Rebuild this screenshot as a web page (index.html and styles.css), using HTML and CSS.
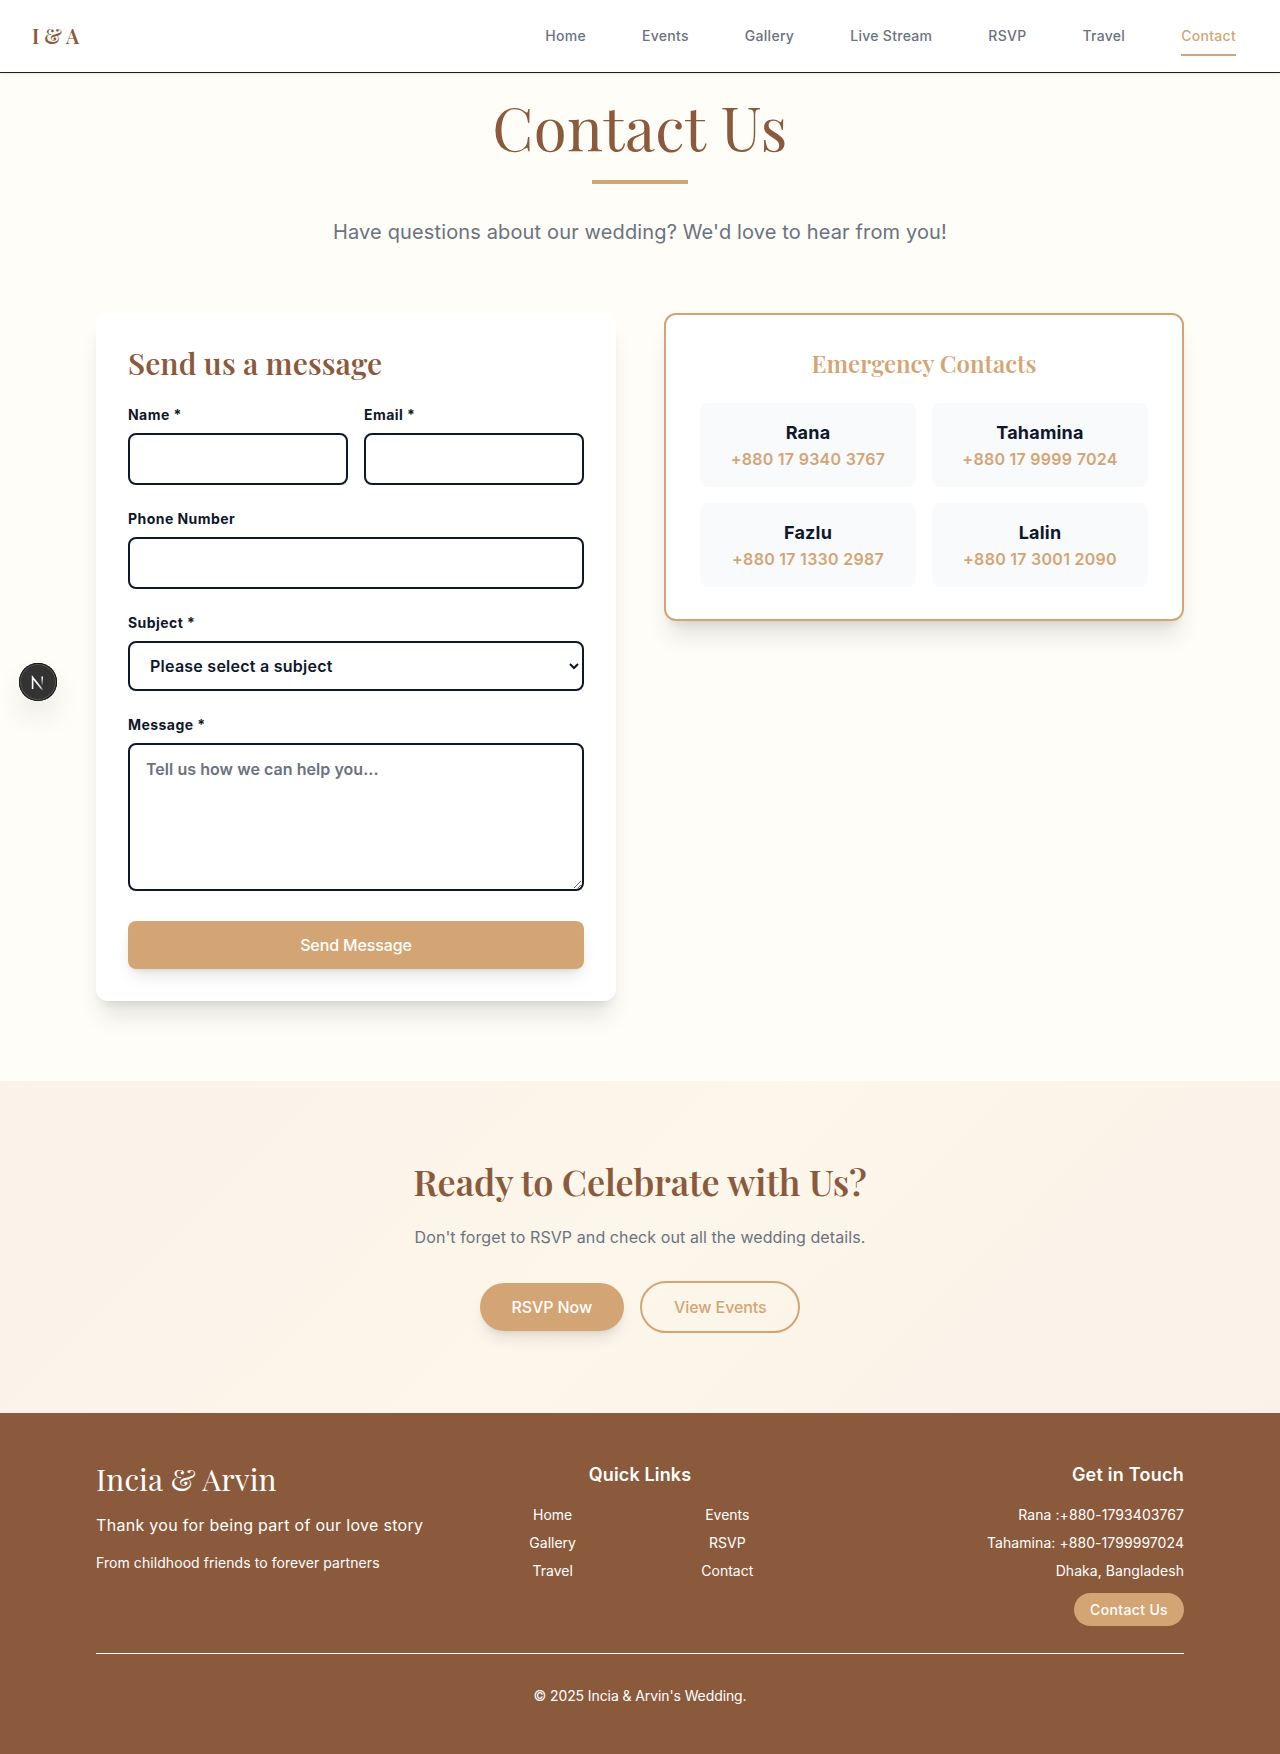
FILE: index.html
```
<!DOCTYPE html>
<html lang="en">
<head>
<meta charset="utf-8">
<title>Contact Us - Incia &amp; Arvin</title>
<link rel="stylesheet" href="styles.css">
</head>
<body>
<header class="navbar">
  <a class="brand" href="#">I &amp; A</a>
  <nav class="nav-links">
    <a href="#">Home</a>
    <a href="#">Events</a>
    <a href="#">Gallery</a>
    <a href="#">Live Stream</a>
    <a href="#">RSVP</a>
    <a href="#">Travel</a>
    <a href="#" class="active">Contact</a>
  </nav>
</header>

<main>
  <section class="intro">
    <h1>Contact Us</h1>
    <div class="rule"></div>
    <p>Have questions about our wedding? We'd love to hear from you!</p>
  </section>

  <section class="columns">
    <div class="card form-card">
      <h2>Send us a message</h2>
      <form>
        <div class="pair">
          <div class="field"><label for="name">Name *</label><input id="name" type="text"></div>
          <div class="field"><label for="email">Email *</label><input id="email" type="email"></div>
        </div>
        <div class="field"><label for="phone">Phone Number</label><input id="phone" type="tel"></div>
        <div class="field"><label for="subject">Subject *</label>
          <select id="subject"><option>Please select a subject</option></select>
        </div>
        <div class="field"><label for="message">Message *</label>
          <textarea id="message" placeholder="Tell us how we can help you..."></textarea>
        </div>
        <button class="submit" type="button">Send Message</button>
      </form>
    </div>

    <div class="card contacts">
      <h3>Emergency Contacts</h3>
      <div class="contact-grid">
        <div class="person"><strong>Rana</strong><a href="#">+880 17 9340 3767</a></div>
        <div class="person"><strong>Tahamina</strong><a href="#">+880 17 9999 7024</a></div>
        <div class="person"><strong>Fazlu</strong><a href="#">+880 17 1330 2987</a></div>
        <div class="person"><strong>Lalin</strong><a href="#">+880 17 3001 2090</a></div>
      </div>
    </div>
  </section>

  <section class="cta">
    <h2>Ready to Celebrate with Us?</h2>
    <p>Don't forget to RSVP and check out all the wedding details.</p>
    <div class="cta-buttons">
      <a class="pill solid" href="#">RSVP Now</a>
      <a class="pill outline" href="#">View Events</a>
    </div>
  </section>
</main>

<footer class="footer">
  <div class="footer-top">
    <div class="about">
      <h3>Incia &amp; Arvin</h3>
      <p class="thanks">Thank you for being part of our love story</p>
      <p class="tagline">From childhood friends to forever partners</p>
    </div>
    <div class="quick">
      <h4>Quick Links</h4>
      <div class="quick-grid">
        <a href="#">Home</a><a href="#">Events</a>
        <a href="#">Gallery</a><a href="#">RSVP</a>
        <a href="#">Travel</a><a href="#">Contact</a>
      </div>
    </div>
    <div class="touch">
      <h4>Get in Touch</h4>
      <p>Rana :+880-1793403767</p>
      <p>Tahamina: +880-1799997024</p>
      <p>Dhaka, Bangladesh</p>
      <a class="footer-btn" href="#">Contact Us</a>
    </div>
  </div>
  <p class="copyright">© 2025 Incia &amp; Arvin's Wedding.</p>
</footer>

<button class="dev-badge" type="button" aria-label="Dev tools">
  <svg width="38" height="38" viewBox="0 0 38 38" fill="none">
    <defs>
      <linearGradient id="diag" x1="19" y1="20" x2="24.5" y2="27" gradientUnits="userSpaceOnUse"><stop stop-color="#fff"/><stop offset=".6" stop-color="#fff" stop-opacity=".8"/><stop offset="1" stop-color="#fff" stop-opacity="0"/></linearGradient>
      <linearGradient id="stem" x1="23" y1="14" x2="23" y2="23" gradientUnits="userSpaceOnUse"><stop stop-color="#fff"/><stop offset="1" stop-color="#fff" stop-opacity="0"/></linearGradient>
    </defs>
    <path d="M13.6 26V14.4L24 27.4" stroke="url(#diag)" stroke-width="1.6"/>
    <path d="M23.2 13.4V23" stroke="url(#stem)" stroke-width="1.6"/>
  </svg>
</button>
</body>
</html>
```
FILE: styles.css
```
:root {
  --brown: #8b5a3c;
  --gold: #d4a574;
  --ink: #0f172a;
  --slate: #6b7280;
  --serif: "Playfair Display", "Liberation Serif", serif;
}
* { box-sizing: border-box; margin: 0; padding: 0; }
body {
  background: #fefdf8;
  color: var(--ink);
  font: 16px/24px Inter, "Liberation Sans", sans-serif;
}
a { color: inherit; text-decoration: none; }
h1, h2, h3, h4 { font-weight: 600; white-space: nowrap; }

.navbar {
  display: flex;
  align-items: center;
  justify-content: space-between;
  height: 73px;
  padding: 0 44px 0 32px;
  background: #fff;
  border-bottom: 1px solid #1f1f1f;
  box-shadow: 0 1px 3px rgba(0, 0, 0, .08);
}
.brand { font: 600 20px/28px var(--serif); letter-spacing: .1px; color: var(--brown); }
.nav-links { display: flex; gap: 56px; font-size: 14px; font-weight: 500; line-height: 20px; letter-spacing: .29px; color: var(--slate); }
.nav-links a { padding: 8px 0; border-bottom: 2px solid transparent; margin-top: 2px; }
.nav-links .active { color: var(--gold); border-color: var(--gold); }

.intro { display: flex; flex-direction: column; align-items: center; padding-top: 23px; }
.intro h1 { font: 400 60px/60px var(--serif); letter-spacing: .4px; color: var(--brown); }
.rule { width: 96px; height: 4px; margin: 24px 0 34px; background: var(--gold); }
.intro p { font-size: 20px; line-height: 28px; letter-spacing: .14px; color: var(--slate); }

.columns {
  display: grid;
  grid-template-columns: 1fr 1fr;
  gap: 48px;
  align-items: start;
  padding: 67px 96px 80px;
}
.card {
  background: #fff;
  border-radius: 12px;
  box-shadow: 0 20px 25px -5px rgba(0, 0, 0, .1), 0 8px 10px -6px rgba(0, 0, 0, .1);
}
.form-card { padding: 32px; }
.form-card h2 { font: 600 30px/36px var(--serif); letter-spacing: .12px; color: var(--brown); margin-bottom: 24px; }
form { display: flex; flex-direction: column; gap: 24px; }
.pair { display: grid; grid-template-columns: 1fr 1fr; gap: 16px; }
.field { display: flex; flex-direction: column; gap: 8px; }
label { font-size: 14px; line-height: 20px; font-weight: 700; letter-spacing: .45px; }
input, select, textarea {
  width: 100%;
  border: 2px solid var(--ink);
  border-radius: 8px;
  background: #fff;
  color: var(--ink);
  font: 600 16px/24px Inter, sans-serif;
  padding: 12px 16px;
}
input { height: 52px; }
select { height: 50px; letter-spacing: .25px; }
textarea { display: block; height: 148px; resize: vertical; letter-spacing: .05px; }
textarea::placeholder { color: var(--slate); }
.submit {
  height: 48px;
  margin-top: 6px;
  border: 0;
  border-radius: 8px;
  background: var(--gold);
  color: #fff;
  font: 500 16px/24px Inter, sans-serif;
  letter-spacing: -.12px;
  box-shadow: 0 10px 15px -3px rgba(0, 0, 0, .1), 0 4px 6px -4px rgba(0, 0, 0, .1);
}

.contacts { padding: 32px 34px; border: 2px solid var(--gold); }
.contacts h3 { font: 600 24px/32px var(--serif); color: var(--gold); text-align: center; margin-bottom: 24px; }
.contact-grid { display: grid; grid-template-columns: 1fr 1fr; gap: 16px; }
.person { display: flex; flex-direction: column; align-items: center; height: 84px; padding: 16px 0; border-radius: 8px; background: #f8fafc; font-weight: 600; }
.person strong { font-size: 18px; line-height: 28px; font-weight: 700; letter-spacing: .2px; }
.person a { color: var(--gold); letter-spacing: .27px; }

.cta {
  display: flex;
  flex-direction: column;
  align-items: center;
  height: 332px;
  padding-top: 80px;
  background: linear-gradient(135deg, #fbf2ea, #fdf6ea 50%, #faf1e8);
}
.cta h2 { font: 600 36px/40px var(--serif); letter-spacing: -.08px; color: var(--brown); }
.cta p { margin: 24px 0 32px; letter-spacing: .09px; color: var(--slate); }
.cta-buttons { display: flex; align-items: center; gap: 16px; }
.pill { padding: 12px 32px; border-radius: 26px; font-weight: 500; letter-spacing: -.1px; }
.solid { background: var(--gold); color: #fff; box-shadow: 0 10px 15px -3px rgba(0, 0, 0, .1), 0 4px 6px -4px rgba(0, 0, 0, .1); }
.outline { border: 2px solid var(--gold); color: var(--gold); }

.footer { height: 341px; padding: 48px 96px 0; background: var(--brown); color: #fff; font-size: 14px; line-height: 20px; }
.footer-top { display: grid; grid-template-columns: repeat(3, 1fr); gap: 32px; height: 193px; border-bottom: 1px solid #fff; }
.about h3 { font: 400 30px/36px var(--serif); letter-spacing: .15px; }
.thanks { margin: 16px 0; font-size: 16px; line-height: 24px; letter-spacing: .3px; }
.tagline { letter-spacing: .07px; }
.footer h4 { font-size: 18px; line-height: 28px; letter-spacing: .15px; margin-bottom: 16px; }
.footer .touch h4 { letter-spacing: .24px; }
.quick { text-align: center; }
.quick-grid { display: grid; grid-template-columns: 1fr 1fr; gap: 8px; }
.touch { display: flex; flex-direction: column; align-items: flex-end; }
.touch p { margin-bottom: 8px; letter-spacing: .06px; white-space: nowrap; }
.footer-btn { margin-top: 4px; padding: 7px 16px 6px; border-radius: 17px; background: var(--gold); font-weight: 500; letter-spacing: .35px; }
.copyright { padding-top: 32px; letter-spacing: -.1px; text-align: center; }

.dev-badge {
  position: fixed;
  left: 19px;
  top: 663px;
  width: 38px;
  height: 38px;
  border: 0;
  border-radius: 50%;
  background: #333;
  box-shadow: inset 0 0 0 1px #171717, inset 0 0 0 2px #555, 0 16px 32px -8px rgba(0, 0, 0, .24);
}
.dev-badge svg { display: block; }
```
